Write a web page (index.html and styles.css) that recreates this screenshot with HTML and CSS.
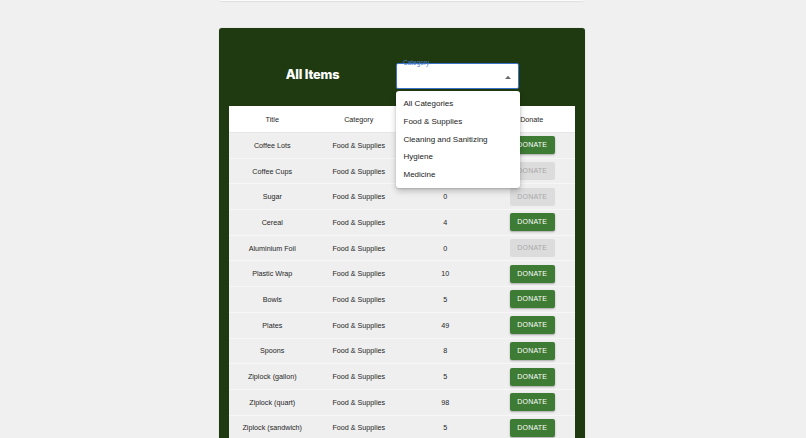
FILE: index.html
```html
<!DOCTYPE html>
<html>
<head>
<meta charset="utf-8">
<link rel="stylesheet" href="styles.css">
</head>
<body>
<div class="topbar"></div>
<div class="card">
  <div class="header">
    <div class="title">All Items</div>
    <div class="select">
      <span class="label">Category</span>
      <svg class="arrow" width="6" height="4" viewBox="0 0 6 4"><path d="M0 4 L3 0.8 L6 4 Z" fill="#6b6b6b"/></svg>
      <div class="menu">
        <div class="item">All Categories</div>
        <div class="item">Food &amp; Supplies</div>
        <div class="item">Cleaning and Sanitizing</div>
        <div class="item">Hygiene</div>
        <div class="item">Medicine</div>
      </div>
    </div>
  </div>
  <div class="table">
    <div class="row head"><div>Title</div><div>Category</div><div>Quantity</div><div>Donate</div></div>
    <div class="row"><div>Coffee Lots</div><div>Food &amp; Supplies</div><div>12</div><div><span class="btn">DONATE</span></div></div>
    <div class="row"><div>Coffee Cups</div><div>Food &amp; Supplies</div><div>0</div><div><span class="btn off">DONATE</span></div></div>
    <div class="row"><div>Sugar</div><div>Food &amp; Supplies</div><div>0</div><div><span class="btn off">DONATE</span></div></div>
    <div class="row"><div>Cereal</div><div>Food &amp; Supplies</div><div>4</div><div><span class="btn">DONATE</span></div></div>
    <div class="row"><div>Aluminium Foil</div><div>Food &amp; Supplies</div><div>0</div><div><span class="btn off">DONATE</span></div></div>
    <div class="row"><div>Plastic Wrap</div><div>Food &amp; Supplies</div><div>10</div><div><span class="btn">DONATE</span></div></div>
    <div class="row"><div>Bowls</div><div>Food &amp; Supplies</div><div>5</div><div><span class="btn">DONATE</span></div></div>
    <div class="row"><div>Plates</div><div>Food &amp; Supplies</div><div>49</div><div><span class="btn">DONATE</span></div></div>
    <div class="row"><div>Spoons</div><div>Food &amp; Supplies</div><div>8</div><div><span class="btn">DONATE</span></div></div>
    <div class="row"><div>Ziplock (gallon)</div><div>Food &amp; Supplies</div><div>5</div><div><span class="btn">DONATE</span></div></div>
    <div class="row"><div>Ziplock (quart)</div><div>Food &amp; Supplies</div><div>98</div><div><span class="btn">DONATE</span></div></div>
    <div class="row"><div>Ziplock (sandwich)</div><div>Food &amp; Supplies</div><div>5</div><div><span class="btn">DONATE</span></div></div>
  </div>
</div>
</body>
</html>
```

FILE: styles.css
```css
html, body {
  margin: 0;
  padding: 0;
  background: #f0f0f0;
  font-family: "Liberation Sans", Arial, sans-serif;
  overflow: hidden;
  height: 438px;
}
.topbar {
  height: 1px;
  margin: 0 223px 0 220px;
  background: #fbfbfb;
  box-shadow: 0 1px 1px rgba(0,0,0,0.08);
}
.card {
  margin: 27px 0 0 219px;
  width: 346px;
  padding: 34px 10px 0 10px;
  background: #1f3a10;
  border-radius: 3px;
  box-shadow: 0 0 1px rgba(0,0,0,0.3);
  height: 600px;
}
.header {
  display: flex;
  align-items: center;
  height: 27px;
  margin-bottom: 17px;
}
.title {
  width: 167px;
  text-align: center;
  color: #ffffff;
  font-family: "Inter", "Open Sans", sans-serif;
  font-weight: 800;
  font-size: 12.8px;
  letter-spacing: -0.2px;
  margin-top: -2px;
}
.select {
  position: relative;
  width: 121px;
  height: 24px;
  background: #ffffff;
  border: 1.5px solid #3b73c8;
  border-radius: 2px;
}
.label {
  position: absolute;
  left: 6px;
  top: -5px;
  font-size: 6.5px;
  color: #4a7fd2;
  line-height: 7px;
}
.arrow {
  position: absolute;
  right: 7px;
  top: 11px;
}
.menu {
  position: absolute;
  left: -1.5px;
  top: 27.5px;
  width: 124px;
  padding: 4px 0;
  background: #ffffff;
  border-radius: 3px;
  box-shadow: 0 3px 6px rgba(0,0,0,0.22), 0 1px 2px rgba(0,0,0,0.14);
  z-index: 5;
}
.item {
  height: 17.8px;
  line-height: 17.8px;
  padding-left: 8px;
  font-size: 8px;
  color: #222222;
}
.table {
  background: #efefef;
}
.row {
  display: grid;
  grid-template-columns: repeat(4, 1fr);
  align-items: center;
  height: 25.7px;
  border-bottom: 1px solid #f7f7f7;
  box-sizing: border-box;
  font-size: 7.2px;
  color: #262626;
  text-align: center;
}
.row.head {
  height: 27px;
  background: #ffffff;
  border-bottom: 1px solid #e6e6e6;
}
.btn {
  display: inline-block;
  width: 45px;
  height: 18px;
  line-height: 18px;
  margin-left: 1px;
  background: #3e7b34;
  color: #ffffff;
  font-size: 7px;
  letter-spacing: 0.2px;
  border-radius: 2px;
  box-shadow: 0 1px 2px rgba(0,0,0,0.3);
}
.btn.off {
  background: #dcdcdc;
  color: #a9a9a9;
  box-shadow: none;
}
```
